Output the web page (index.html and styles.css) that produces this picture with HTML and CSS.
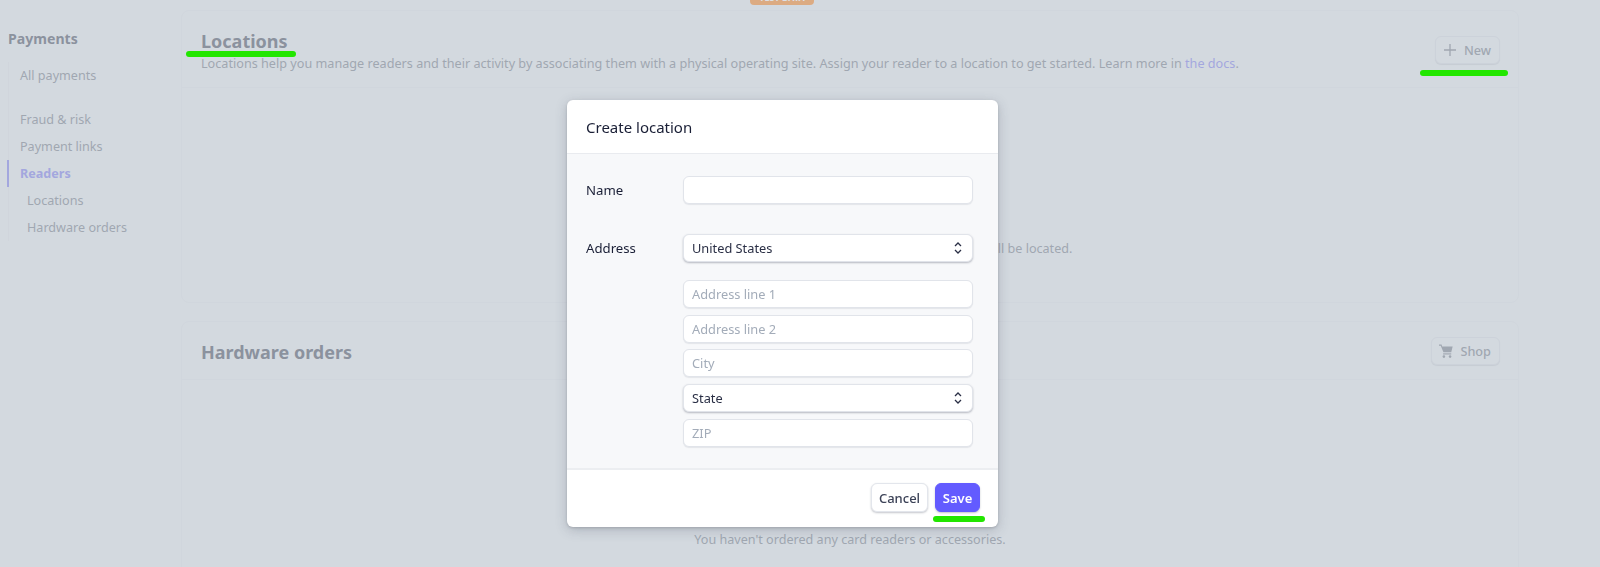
FILE: index.html
```html
<!DOCTYPE html>
<html lang="en">
<head>
    <title>Readers - Locations</title>
    <meta charset="UTF-8" />
    <meta name="viewport" content="width=device-width, initial-scale=1.0" />
    <link rel="stylesheet" href="styles.css">
</head>
<body>
    <div class="test-badge">TEST DATA</div>

    <div class="page">
        <nav class="sidebar">
            <h4 class="side-title">Payments</h4>
            <ul class="side-list">
                <li class="side-item side-gap">All payments</li>
                <li class="side-item">Fraud &amp; risk</li>
                <li class="side-item">Payment links</li>
                <li class="side-item active">Readers</li>
                <li class="side-item sub">Locations</li>
                <li class="side-item sub">Hardware orders</li>
            </ul>
        </nav>

        <main class="content">
            <section class="card card-locations">
                <div class="card-head">
                    <div>
                        <h2 class="card-title marked">Locations</h2>
                        <p class="card-desc">Locations help you manage readers and their activity by associating them with a physical operating site. Assign your reader to a location to get started. Learn more in <a href="#">the docs</a>.</p>
                    </div>
                    <button class="btn btn-ghost marked-btn">
                        <svg class="icon" width="14" height="14" viewBox="0 0 14 14"><path d="M7 1v12M1 7h12" stroke="currentColor" stroke-width="1.3" fill="none"/></svg>
                        New
                    </button>
                </div>
                <div class="card-empty">Create your first location to specify where your card readers will be located.</div>
            </section>

            <section class="card card-orders">
                <div class="card-head">
                    <h2 class="card-title">Hardware orders</h2>
                    <button class="btn btn-ghost">
                        <svg class="icon" width="14" height="14" viewBox="0 0 12 12"><path d="M0 .5h2.2l.5 1.6h9L10.500 7H3.800L1.500 1.500H0z" fill="currentColor"/><path d="M3.500 8.500h7" stroke="currentColor"/><circle cx="4.200" cy="10.800" r="1.100" fill="currentColor"/><circle cx="9.500" cy="10.800" r="1.100" fill="currentColor"/></svg>
                        Shop
                    </button>
                </div>
                <div class="card-empty">You haven't ordered any card readers or accessories.</div>
            </section>
        </main>
    </div>

    <div class="overlay"></div>

    <div class="modal">
        <div class="modal-head">Create location</div>
        <div class="modal-body">
            <div class="form-row">
                <label class="form-label">Name</label>
                <input class="field" type="text">
            </div>
            <div class="form-row form-address">
                <label class="form-label">Address</label>
                <div class="field select">
                    United States
                    <svg width="8" height="12" viewBox="0 0 8 12"><path d="M1 4l3-3 3 3M1 8l3 3 3-3" stroke="#2a2f45" stroke-width="1.300" fill="none"/></svg>
                </div>
            </div>
            <div class="address-lines">
                <input class="field" type="text" placeholder="Address line 1">
                <input class="field" type="text" placeholder="Address line 2">
                <input class="field" type="text" placeholder="City">
                <div class="field select">
                    State
                    <svg width="8" height="12" viewBox="0 0 8 12"><path d="M1 4l3-3 3 3M1 8l3 3 3-3" stroke="#2a2f45" stroke-width="1.300" fill="none"/></svg>
                </div>
                <input class="field" type="text" placeholder="ZIP">
            </div>
        </div>
        <div class="modal-foot">
            <button class="btn btn-cancel">Cancel</button>
            <button class="btn btn-save">Save</button>
        </div>
    </div>
</body>
</html>
```

FILE: styles.css
```css
* {
    box-sizing: border-box;
}

body {
    margin: 0;
    height: 567px;
    overflow: hidden;
    background: #edf1f3;
    color: #5c6270;
    font-family: 'Noto Sans', sans-serif;
    font-size: 12.650px;
}

.test-badge {
    position: absolute;
    top: -9px;
    left: 750px;
    width: 64px;
    height: 14px;
    border-radius: 4px;
    background: #ff9438;
    color: white;
    font-size: 9px;
    font-weight: 700;
    line-height: 14px;
    text-align: center;
}

.page {
    display: flex;
    height: 567px;
    padding-top: 10px;
}

/* Sidebar */
.sidebar {
    width: 181px;
    flex-shrink: 0;
    padding: 19px 0 0 8px;
}

.side-title {
    margin: 0 0 13px;
    font-size: 14.100px;
    font-weight: 700;
    line-height: 20px;
}

.side-list {
    list-style: none;
    margin: 0;
    padding: 0;
    border-left: 1px solid #e6e9ed;
    width: 150px;
}

.side-item {
    height: 27px;
    padding-left: 11px;
    font-size: 12.600px;
    line-height: 27px;
    color: #868c96;
}

.side-gap {
    margin-bottom: 17px;
}

.side-item.active {
    color: #8c8cf0;
    font-weight: 700;
    box-shadow: -2px 0 0 #8c8cf0;
}

.side-item.sub {
    padding-left: 18px;
}

/* Cards */
.content {
    width: 1338px;
}

.card {
    border: 1px solid #e7eaee;
    border-radius: 8px;
}

.card-locations {
    height: 293px;
    margin-bottom: 18px;
}

.card-orders {
    height: 300px;
}

.card-head {
    display: flex;
    justify-content: space-between;
    align-items: center;
    padding: 0 18px 0 19px;
    border-bottom: 1px solid #e7eaee;
}

.card-locations .card-head {
    height: 77px;
    padding-top: 3px;
}

.card-orders .card-head {
    height: 58px;
}

.card-orders .card-title {
    margin-top: 2px;
}

.card-title {
    margin: 0;
    font-size: 18px;
    font-weight: 700;
    line-height: 24px;
    color: #5c6270;
}

.card-desc {
    margin: 1px 0 0;
    line-height: 19px;
    color: #868c96;
}

.card-desc a {
    color: #8c8cf0;
    text-decoration: none;
}

.card-empty {
    text-align: center;
    font-size: 12.600px;
    color: #868c96;
}

.card-locations .card-empty {
    padding-top: 152px;
}

.card-orders .card-empty {
    padding-top: 151px;
}

/* Green annotation strokes, drawn over the dim layer */
.marked, .marked-btn {
    position: relative;
}

.marked::after, .marked-btn::after {
    content: "";
    position: absolute;
    z-index: 2;
    height: 6px;
    border-radius: 3px;
    background: #22e600;
}

.marked {
    width: 85px;
}

.marked::after {
    left: -15px;
    width: 110px;
    bottom: -4px;
}

.marked-btn {
    top: -1px;
}

.marked-btn::after {
    left: -16px;
    width: 88px;
    bottom: -13px;
}

/* Buttons */
.btn {
    display: inline-flex;
    align-items: center;
    justify-content: center;
    height: 28px;
    padding: 0 8px;
    border: 1px solid #dfe2e8;
    border-radius: 6px;
    background: #edf1f3;
    color: #868c96;
    font-family: inherit;
    font-size: 12.700px;
    font-weight: 500;
}

.btn-ghost {
    gap: 7px;
    padding-left: 7px;
    box-shadow: 0 1px 1px rgba(60, 66, 87, 0.15);
}

.btn-cancel {
    width: 57px;
    height: 29px;
    background: white;
    color: #3c4257;
    border-color: #e3e6ec;
    font-size: 13px;
    box-shadow: 0 1px 2px rgba(60, 66, 87, 0.3);
}

.btn-save {
    position: relative;
    width: 45px;
    height: 29px;
    background: #635bff;
    border-color: #635bff;
    color: white;
    font-size: 13px;
    font-weight: 600;
    box-shadow: 0 1px 2px rgba(60, 66, 87, 0.3);
}

.btn-save::after {
    content: "";
    position: absolute;
    left: -3px;
    bottom: -11px;
    width: 52px;
    height: 6px;
    border-radius: 3px;
    background: #22e600;
}

/* Dim layer under the dialog */
.overlay {
    position: fixed;
    z-index: 1;
    top: 0;
    left: 0;
    right: 0;
    bottom: 0;
    background: rgba(185, 193, 204, 0.5);
}

/* Modal */
.modal {
    position: fixed;
    z-index: 3;
    top: 100px;
    left: 567px;
    width: 431px;
    height: 427px;
    display: flex;
    flex-direction: column;
    background: white;
    border-radius: 6px;
    overflow: hidden;
    box-shadow: 0 3px 12px rgba(60, 66, 87, 0.25), 0 1px 3px rgba(0, 0, 0, 0.15);
    color: #1a1f36;
}

.modal-head {
    height: 54px;
    padding-left: 19px;
    border-bottom: 1px solid #e9ebef;
    font-size: 15px;
    line-height: 54px;
}

.modal-body {
    flex: 1;
    padding: 21.500px 24px 0 19px;
    background: #f7f8fa;
}

.form-row {
    display: flex;
    align-items: center;
}

.form-address {
    margin-top: 30px;
}

.form-label {
    width: 97px;
    flex-shrink: 0;
    font-size: 13.200px;
}

.address-lines {
    display: flex;
    flex-direction: column;
    gap: 6.700px;
    margin: 18.500px 0 0 97px;
}

.field {
    width: 290px;
    height: 28px;
    padding: 0 8px;
    border: 1px solid #e1e4ea;
    border-radius: 6px;
    background: white;
    color: #1a1f36;
    font-family: inherit;
    font-size: 12.800px;
    outline: none;
    box-shadow: 0 1px 1px rgba(60, 66, 87, 0.1);
}

.field::placeholder {
    color: #a3acb9;
}

.select {
    display: flex;
    justify-content: space-between;
    align-items: center;
    padding-right: 10px;
    color: #2a2f45;
    box-shadow: 0 1px 2px rgba(60, 66, 87, 0.35);
}

.modal-foot {
    display: flex;
    justify-content: flex-end;
    gap: 7px;
    height: 59px;
    padding: 13px 18px 0 0;
    border-top: 2px solid #eceef1;
}
```
